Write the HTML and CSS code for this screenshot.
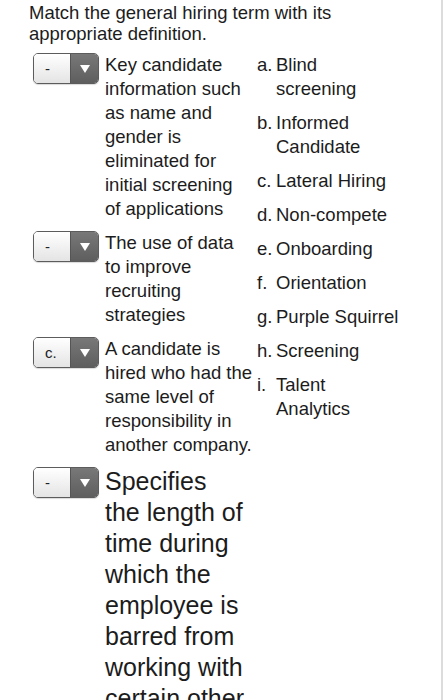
FILE: index.html
```html
<!DOCTYPE html>
<html>
<head>
<meta charset="utf-8">
<link rel="stylesheet" href="styles.css">
</head>
<body>
<div class="page">
  <p class="prompt">Match the general hiring term with its appropriate definition.</p>
  <div class="match">
    <div class="questions">
      <div class="q">
        <div class="select"><span class="sel-value">-</span><span class="sel-btn"><svg width="10" height="8" viewBox="0 0 10 8"><polygon points="0,0 10,0 5,8" fill="#fff"/></svg></span></div>
        <div class="q-text">Key candidate information such as name and gender is eliminated for initial screening of applications</div>
      </div>
      <div class="q">
        <div class="select"><span class="sel-value">-</span><span class="sel-btn"><svg width="10" height="8" viewBox="0 0 10 8"><polygon points="0,0 10,0 5,8" fill="#fff"/></svg></span></div>
        <div class="q-text">The use of data to improve recruiting strategies</div>
      </div>
      <div class="q">
        <div class="select"><span class="sel-value">c.</span><span class="sel-btn"><svg width="10" height="8" viewBox="0 0 10 8"><polygon points="0,0 10,0 5,8" fill="#fff"/></svg></span></div>
        <div class="q-text">A candidate is hired who had the same level of responsibility in another company.</div>
      </div>
      <div class="q">
        <div class="select"><span class="sel-value">-</span><span class="sel-btn"><svg width="10" height="8" viewBox="0 0 10 8"><polygon points="0,0 10,0 5,8" fill="#fff"/></svg></span></div>
        <div class="q-text q-large">Specifies the length of time during which the employee is barred from working with certain other companies.</div>
      </div>
    </div>
    <ul class="answers">
      <li><span class="mark">a.</span><span class="ans">Blind screening</span></li>
      <li><span class="mark">b.</span><span class="ans">Informed Candidate</span></li>
      <li><span class="mark">c.</span><span class="ans">Lateral Hiring</span></li>
      <li><span class="mark">d.</span><span class="ans">Non-compete</span></li>
      <li><span class="mark">e.</span><span class="ans">Onboarding</span></li>
      <li><span class="mark">f.</span><span class="ans">Orientation</span></li>
      <li><span class="mark">g.</span><span class="ans">Purple Squirrel</span></li>
      <li><span class="mark">h.</span><span class="ans">Screening</span></li>
      <li><span class="mark">i.</span><span class="ans">Talent Analytics</span></li>
    </ul>
  </div>
</div>
</body>
</html>
```
FILE: styles.css
```css
html, body {
  margin: 0;
  padding: 0;
  background: #fff;
}
body {
  font-family: "Liberation Sans", Arial, Helvetica, sans-serif;
  font-size: 18.5px;
  color: #1c1c1c;
  overflow: hidden;
}
.page {
  box-sizing: border-box;
  width: 443px;
  min-height: 700px;
  border-right: 2px solid #dcdcdc;
  padding: 2px 0 0 29px;
}
.prompt {
  margin: 0;
  max-width: 360px;
  line-height: 21px;
}
.match {
  display: flex;
  align-items: flex-start;
  margin-top: 9px;
}
.questions {
  display: flex;
  flex-direction: column;
  gap: 10px;
}
.q {
  display: flex;
  align-items: flex-start;
}
.select {
  display: flex;
  box-sizing: border-box;
  width: 66px;
  height: 31px;
  margin: 0 6px 0 4px;
  border: 1px solid #5c5c5c;
  border-radius: 5px;
  overflow: hidden;
  box-shadow: 0 1px 1px rgba(0,0,0,0.15);
  flex: none;
}
.sel-value {
  width: 36px;
  background: linear-gradient(#ffffff, #e4e4e4);
  font-size: 15px;
  line-height: 29px;
  padding-left: 11px;
  box-sizing: border-box;
  color: #222;
}
.sel-btn {
  flex: 1;
  display: flex;
  align-items: center;
  justify-content: center;
  background: linear-gradient(#787878, #5e5e5e);
  border-left: 1px solid #555;
}
.q-text {
  width: 148px;
  line-height: 24px;
}
.q-large {
  width: 140px;
  font-size: 25px;
  line-height: 31px;
  margin-top: -1px;
}
.answers {
  list-style: none;
  margin: 0 0 0 4px;
  padding: 0;
  display: flex;
  flex-direction: column;
  gap: 10px;
}
.answers li {
  display: flex;
  line-height: 24px;
}
.mark {
  width: 19px;
  flex: none;
}
.ans {
  width: 124px;
}
```
